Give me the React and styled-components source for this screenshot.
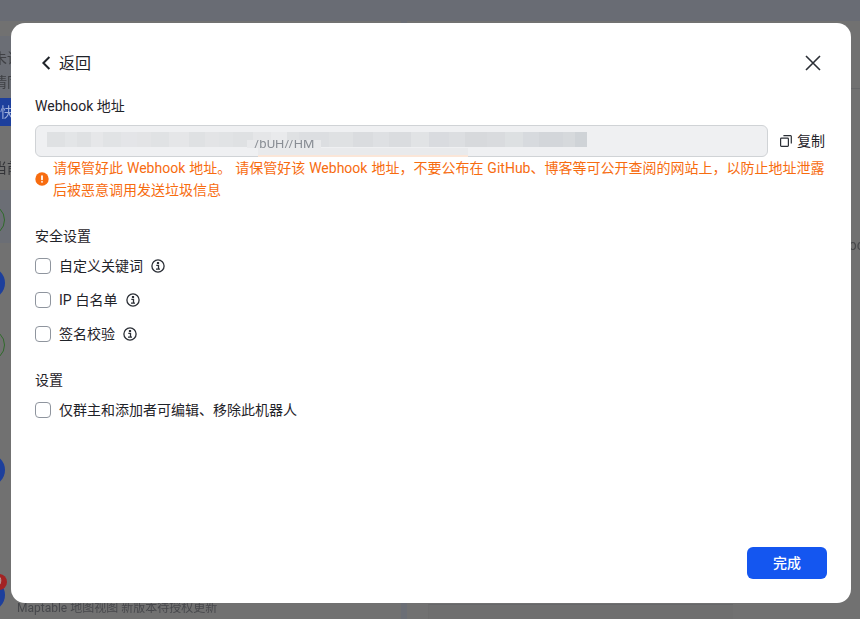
import styled, { createGlobalStyle } from "styled-components";

const GlobalStyle = createGlobalStyle`
    html, body {
        margin: 0;
        padding: 0;
        height: 100%;
        overflow: hidden;
        background: #717171;
        font-family: Roboto, "Noto Sans CJK SC", "Noto Sans", sans-serif;
    }
    * { box-sizing: border-box; }
`;

const mosaicShades = [
    ["#dfe1e3", 18], ["#e3e5e7", 12], ["#dfe1e3", 14], ["#e6e7e9", 12], ["#e1e3e5", 18], ["#e4e5e8", 16],
    ["#e3e4e6", 14], ["#e0e2e4", 18], ["#e5e6e8", 20], ["#dfe1e3", 16], ["#e3e4e6", 14], ["#e1e3e5", 14],
    ["#dfe1e3", 20], ["#e5e6e8", 18], ["#e9eaec", 16], ["#dfe1e3", 12], ["#dcdee1", 30], ["#dfe1e3", 24],
    ["#dadcdf", 20], ["#dee0e3", 16], ["#dadcdf", 22], ["#e1e3e5", 18], ["#d9dbdf", 20], ["#dcdee1", 16],
    ["#d7d9dc", 22], ["#d9dbde", 18], ["#dde0e2", 18], ["#d7dade", 16],
    ["#d3d6da", 24], ["#d6d9dc", 12], ["#cfd3d7", 12],
];

function Chevron() {
    return (
        <svg width="10" height="14" viewBox="0 0 10 14" fill="none">
            <path d="M8.4 1 2.4 7l6 6" stroke="#1f2329" strokeWidth="2" />
        </svg>
    );
}

function CloseIcon() {
    return (
        <svg width="16" height="16" viewBox="0 0 16 16" fill="none">
            <path d="M1 1l14 14M15 1 1 15" stroke="#2b2f36" strokeWidth="1.6" />
        </svg>
    );
}

function CopyIcon() {
    return (
        <svg width="12" height="12" viewBox="0 0 12 12" fill="none">
            <rect x="0.6" y="3.1" width="7.8" height="8.3" rx="0.8" stroke="#2b2f36" strokeWidth="1.2" />
            <path d="M3.4 0.7h7.2a.7.7 0 0 1 .7.7v7" stroke="#2b2f36" strokeWidth="1.2" />
        </svg>
    );
}

function InfoIcon() {
    return (
        <svg width="14" height="14" viewBox="0 0 14 14" fill="none">
            <circle cx="7" cy="7" r="6.1" stroke="#2b2f36" strokeWidth="1.3" />
            <rect x="5.9" y="3" width="2.2" height="2" fill="#2b2f36" />
            <path d="M5.3 6.3h2.2v3.6M5 10.2h4" stroke="#2b2f36" strokeWidth="1.3" />
        </svg>
    );
}

function WarnIcon() {
    return (
        <svg width="14" height="14" viewBox="0 0 14 14">
            <circle cx="7" cy="7" r="6.7" fill="#f76c10" />
            <rect x="6.1" y="3.2" width="1.8" height="5" rx="0.8" fill="#fff" />
            <rect x="6.1" y="9" width="1.8" height="1.8" rx="0.8" fill="#fff" />
        </svg>
    );
}

function CheckRow({ label, info }) {
    return (
        <Row>
            <CheckBox />
            <span>{label}</span>
            {info && <InfoIcon />}
        </Row>
    );
}

export default function App() {
    return (
        <>
            <GlobalStyle />
            <DimPage>
                <TopBar />
                <PageBody>
                    <ListColumn>
                        <Gap $h={15} />
                        <NoticeCard>
                            <NoticeLine>未读</NoticeLine>
                            <NoticeLine>情同</NoticeLine>
                        </NoticeCard>
                        <BlueTag>快速</BlueTag>
                        <SectionTitle>当前</SectionTitle>
                        <ListRow $tint>
                            <Ring />
                        </ListRow>
                        <ListRow>
                            <Dot />
                        </ListRow>
                        <ListRow>
                            <Ring />
                        </ListRow>
                        <ListRow />
                        <ListRow>
                            <Dot />
                        </ListRow>
                        <ListRow />
                        <ListRow>
                            <DotWrap>
                                <Dot />
                                <Badge>9</Badge>
                            </DotWrap>
                            <Caption>Maptable 地图视图 新版本待授权更新</Caption>
                        </ListRow>
                    </ListColumn>
                    <Divider />
                    <RightColumn>
                        <RightHeader />
                        <RightText>oc</RightText>
                        <RightCard />
                    </RightColumn>
                </PageBody>
            </DimPage>

            <Modal>
                <Header>
                    <BackLink>
                        <Chevron />
                        <span>返回</span>
                    </BackLink>
                    <CloseIcon />
                </Header>

                <FieldLabel>Webhook 地址</FieldLabel>
                <UrlRow>
                    <UrlInput>
                        <Mosaic>
                            {mosaicShades.map(([color, width], i) => (
                                <MosaicCell key={i} $color={color} $width={width} />
                            ))}
                            <UrlPart>/bUH//HM</UrlPart>
                        </Mosaic>
                        <Smear />
                    </UrlInput>
                    <CopyButton>
                        <CopyIcon />
                        <span>复制</span>
                    </CopyButton>
                </UrlRow>

                <Warning>
                    <WarnIcon />
                    <p>
                        请保管好此 Webhook 地址。 请保管好该 Webhook 地址，不要公布在 GitHub、博客等可公开查阅的网站上，以防止地址泄露后被恶意调用发送垃圾信息
                    </p>
                </Warning>

                <SectionLabel $top={24}>安全设置</SectionLabel>
                <CheckList>
                    <CheckRow label="自定义关键词" info />
                    <CheckRow label="IP 白名单" info />
                    <CheckRow label="签名校验" info />
                </CheckList>

                <SectionLabel $top={25}>设置</SectionLabel>
                <CheckList>
                    <CheckRow label="仅群主和添加者可编辑、移除此机器人" />
                </CheckList>

                <Footer>
                    <DoneButton>完成</DoneButton>
                </Footer>
            </Modal>
        </>
    );
}

const DimPage = styled.div`
    display: flex;
    flex-direction: column;
    height: 100vh;
    overflow: hidden;
    background: #717171;
    filter: blur(0.5px);
`;

const TopBar = styled.div`
    height: 21px;
    flex: none;
    background: #696c74;
`;

const PageBody = styled.div`
    flex: 1;
    display: flex;
    min-height: 0;
`;

const ListColumn = styled.div`
    width: 401px;
    flex: none;
    display: flex;
    flex-direction: column;
`;

const Gap = styled.div`
    height: ${(p) => p.$h}px;
    flex: none;
`;

const NoticeCard = styled.div`
    height: 62px;
    flex: none;
    background: #6b6e75;
    padding: 10px 0 0 0;
`;

const NoticeLine = styled.div`
    height: 24px;
    font-size: 14px;
    line-height: 24px;
    color: #3f4044;
    margin-left: -7px;
`;

const BlueTag = styled.div`
    height: 28px;
    flex: none;
    background: #1d3f9c;
    color: #9fb0dc;
    font-size: 14px;
    line-height: 28px;
    margin-left: -7px;
    padding-left: 7px;
    width: 60px;
`;

const SectionTitle = styled.div`
    height: 64px;
    flex: none;
    padding-top: 32px;
    font-size: 14px;
    line-height: 20px;
    color: #333438;
    margin-left: -7px;
`;

const ListRow = styled.div`
    height: 62.5px;
    flex: none;
    display: flex;
    align-items: flex-start;
    padding-top: 14px;
    background: ${(p) => (p.$tint ? "linear-gradient(#6b6e75 0 53px, transparent 53px)" : "transparent")};
`;

const Ring = styled.div`
    width: 32px;
    height: 32px;
    margin-left: -27px;
    flex: none;
    border-radius: 50%;
    border: 1.5px solid #2f6a2a;
`;

const Dot = styled.div`
    width: 32px;
    height: 32px;
    margin-left: -27px;
    flex: none;
    border-radius: 50%;
    background: #1d3f9c;
`;

const DotWrap = styled.div`
    position: relative;
    flex: none;
`;

const Badge = styled.div`
    position: absolute;
    left: -9px;
    top: -5px;
    width: 16px;
    height: 16px;
    border-radius: 50%;
    background: #a32323;
    color: #b9a3a3;
    font-size: 10px;
    line-height: 16px;
    text-align: center;
`;

const Caption = styled.div`
    margin: 20px 0 0 12px;
    font-size: 12px;
    line-height: 18px;
    color: #47484c;
    white-space: nowrap;
`;

const Divider = styled.div`
    width: 6px;
    flex: none;
    background: #6b6e75;
`;

const RightColumn = styled.div`
    flex: 1;
    min-width: 0;
    display: flex;
    flex-direction: column;
`;

const RightHeader = styled.div`
    height: 68px;
    flex: none;
    border-bottom: 1px solid #666769;
`;

const RightText = styled.div`
    margin-top: 147px;
    font-size: 14px;
    line-height: 18px;
    color: #47484b;
    text-align: right;
    margin-right: -4px;
`;

const RightCard = styled.div`
    margin: auto 0 0 21px;
    width: 305px;
    height: 15px;
    flex: none;
    border-top: 1px solid #666769;
    border-left: 1px solid #6d6d6d;
    background: #6f6f6f;
`;

const Modal = styled.div`
    position: fixed;
    left: 11px;
    top: 23px;
    width: 840px;
    height: 580px;
    display: flex;
    flex-direction: column;
    padding: 0 24px 24px;
    background: #fff;
    border-radius: 14px;
    color: #1f2329;
    font-size: 14px;
`;

const Header = styled.div`
    height: 40px;
    margin-top: 20px;
    display: flex;
    align-items: center;
    justify-content: space-between;
    padding: 0 6px 0 6px;
`;

const BackLink = styled.div`
    display: flex;
    align-items: center;
    gap: 8px;
    font-size: 16px;
    line-height: 24px;

    span {
        padding-top: 2px;
    }
`;

const FieldLabel = styled.div`
    margin-top: 13px;
    line-height: 20px;
`;

const UrlRow = styled.div`
    margin-top: 9px;
    display: flex;
    align-items: center;
    gap: 12px;
`;

const UrlInput = styled.div`
    position: relative;
    flex: 1;
    height: 32px;
    display: flex;
    align-items: flex-start;
    padding: 6px 0 0 11px;
    background: #eff0f2;
    border: 1px solid #d0d3d6;
    border-radius: 6px;
`;

const Mosaic = styled.div`
    position: relative;
    display: flex;
    height: 15px;
    filter: blur(0.4px);
`;

const MosaicCell = styled.div`
    width: ${(p) => p.$width}px;
    height: 100%;
    background: ${(p) => p.$color};
`;

const UrlPart = styled.div`
    position: absolute;
    left: 200px;
    top: 8px;
    height: 8px;
    overflow: hidden;
    padding: 0 7px;
    background: #e8e9eb;
    font-size: 13px;
    line-height: 8px;
    color: #8a8e95;
`;

const Smear = styled.div`
    position: absolute;
    left: 12px;
    bottom: -1px;
    width: 420px;
    height: 9px;
    background: linear-gradient(90deg, #eff0f2 0 50%, #e9eaec 50% 100%);
    border-bottom: 2px solid #fbe6d8;
    clip-path: polygon(50% 0, 100% 0, 100% 100%, 50% 100%);
`;

const CopyButton = styled.div`
    display: flex;
    align-items: center;
    gap: 5px;
    width: 47px;
    flex: none;
    line-height: 20px;
    white-space: nowrap;
    color: #1f2329;
`;

const Warning = styled.div`
    display: flex;
    align-items: center;
    gap: 4px;
    color: #f76c10;
    word-spacing: 0.5px;

    p {
        margin: 0;
        flex: 1;
        line-height: 22px;
    }
`;

const SectionLabel = styled.div`
    margin-top: ${(p) => p.$top}px;
    line-height: 22px;
`;

const CheckList = styled.div`
    display: flex;
    flex-direction: column;
    gap: 14px;
    margin-top: 9px;
`;

const Row = styled.div`
    display: flex;
    align-items: center;
    height: 20px;
    line-height: 20px;
    word-spacing: 0.5px;

    span {
        margin: 0 8px;
    }
`;

const CheckBox = styled.div`
    width: 16px;
    height: 16px;
    flex: none;
    background: #fff;
    border: 1px solid #8f959e;
    border-radius: 4px;
`;

const Footer = styled.div`
    margin-top: auto;
    display: flex;
    justify-content: flex-end;
`;

const DoneButton = styled.div`
    width: 80px;
    height: 32px;
    background: #1456f0;
    border-radius: 6px;
    color: #fff;
    font-weight: 500;
    line-height: 32px;
    text-align: center;
`;
